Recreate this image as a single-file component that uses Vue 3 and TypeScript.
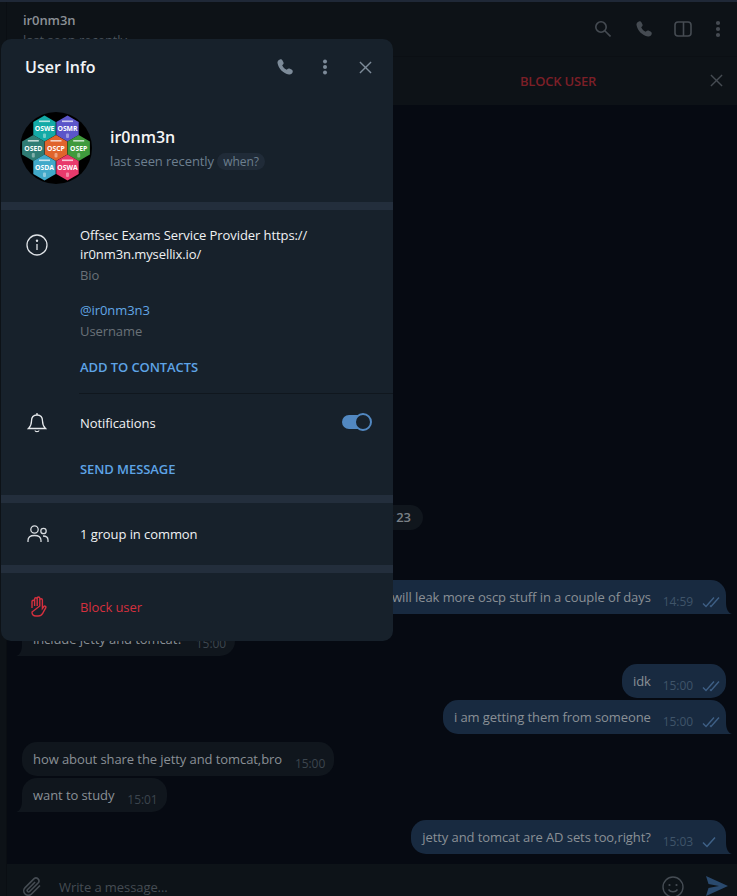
<script setup lang="ts">
type Msg = { id: number; side: 'in' | 'out'; text: string; time: string; check?: 1 | 2; tail?: boolean; top: number }
const messages: Msg[] = [
  { id: 1, side: 'out', text: 'i will leak more oscp stuff in a couple of days', time: '14:59', check: 2, tail: true, top: 0 },
  { id: 2, side: 'in', text: 'include jetty and tomcat?', time: '15:00', tail: true, top: 8 },
  { id: 3, side: 'out', text: 'idk', time: '15:00', check: 2, top: 8 },
  { id: 4, side: 'out', text: 'i am getting them from someone', time: '15:00', check: 2, tail: true, top: 2 },
  { id: 5, side: 'in', text: 'how about share the jetty and tomcat,bro', time: '15:00', top: 8 },
  { id: 6, side: 'in', text: 'want to study', time: '15:01', tail: true, top: 2 },
  { id: 7, side: 'out', text: 'jetty and tomcat are AD sets too,right?', time: '15:03', check: 1, tail: true, top: 8 }
]
const hexes = [
  { x: 44.5, y: 128.5, c: '#14aaa6', t: 'OSWE' },
  { x: 67.5, y: 128.5, c: '#5b55c9', t: 'OSMR' },
  { x: 33.3, y: 148, c: '#2f7c74', t: 'OSED' },
  { x: 56, y: 148, c: '#e0642c', t: 'OSCP' },
  { x: 78.7, y: 148, c: '#3f9a3c', t: 'OSEP' },
  { x: 44.5, y: 167.5, c: '#41a9c9', t: 'OSDA' },
  { x: 67.5, y: 167.5, c: '#e83a6c', t: 'OSWA' }
]
function hexPoints(x: number, y: number): string {
  const w = 11.2
  const h = 13
  const s = 6.5
  return `${x},${y - h} ${x + w},${y - s} ${x + w},${y + s} ${x},${y + h} ${x - w},${y + s} ${x - w},${y - s}`
}
const phonePath =
  'M3 .5C4 0 5 .5 5.500 1.500L6.500 3.500C6.800 4.300 6.600 5 6 5.500L5.200 6.200C5.800 8 7.800 10 9.800 10.800L10.500 10C11 9.400 11.800 9.300 12.500 9.600L14.500 10.600C15.500 11.100 16 12 15.700 13C15.300 14.700 13.800 15.800 12 15.500C6 14.500 1.500 9.500 .5 4C.2 2.500 1.200 1 3 .5Z'
</script>

<template>
  <div class="page">
    <div class="side"></div>
    <main class="chat">
      <header class="topbar">
        <div class="peer">
          <div class="peer-name">ir0nm3n</div>
          <div class="peer-status">last seen recently</div>
        </div>
        <div class="top-icons">
          <svg class="ti" viewBox="0 0 16 16" width="16" height="16"><circle cx="6" cy="6" r="5.200" /><path d="M9.800 9.800l5.700 5.700" /></svg>
          <svg class="ti fill phone-top" viewBox="0 0 16 16" width="16" height="16"><path :d="phonePath" /></svg>
          <svg class="ti panel-top" viewBox="0 0 18 16" width="18" height="16"><rect x="1" y="1" width="16" height="14" rx="3" /><path d="M9.500 1v14" /></svg>
          <svg class="ti dots" viewBox="0 0 6 20" width="6" height="20"><circle cx="3" cy="4" r="2.100" /><circle cx="3" cy="10" r="2.100" /><circle cx="3" cy="16" r="2.100" /></svg>
        </div>
      </header>

      <div class="blockbar">
        <span class="block-label">BLOCK USER</span>
        <svg class="block-close" viewBox="0 0 14 14" width="13" height="13"><path d="M1 1l12 12M13 1L1 13" /></svg>
      </div>

      <section class="messages">
        <div class="date-row"><span class="date-pill">February 23</span></div>
        <div
          v-for="m in messages"
          :key="m.id"
          class="row"
          :class="m.side"
          :style="{ marginTop: m.top + 'px' }"
        >
          <div class="bubble" :class="[m.side, { tail: m.tail }]">
            <span class="msg-text">{{ m.text }}</span>
            <span class="meta">
              <span class="time">{{ m.time }}</span>
              <svg v-if="m.check === 2" class="chk" viewBox="0 0 18 12" width="18" height="12"><path d="M1 7.500l3 3L12 1.500M8 9.500l1 1 8-9" /></svg>
              <svg v-if="m.check === 1" class="chk one" viewBox="0 0 14 12" width="14" height="12"><path d="M1 6.500l4 4L13 1.500" /></svg>
            </span>
          </div>
        </div>
      </section>

      <footer class="composer">
        <svg class="clip" viewBox="0 0 22 22" width="22" height="22"><path d="M19 9.500l-8.500 8.500a4.500 4.500 0 0 1-6.400-6.400l9-9a3 3 0 0 1 4.200 4.200l-8.700 8.700a1.400 1.400 0 0 1-2-2l7.500-7.500" /></svg>
        <span class="placeholder">Write a message...</span>
        <svg class="smile" viewBox="0 0 22 22" width="22" height="22"><circle cx="11" cy="11" r="10" /><circle class="eye" cx="7.500" cy="9" r="1.100" /><circle class="eye" cx="14.500" cy="9" r="1.100" /><path d="M6.500 13.500c2 3 7 3 9 0" /></svg>
        <svg class="send" viewBox="0 0 22 20" width="22" height="20"><path d="M0 0l22 10L0 20l2.500-8L13 10 2.500 8z" /></svg>
      </footer>
    </main>

    <aside class="modal">
      <div class="modal-head">
        <h1 class="modal-title">User Info</h1>
        <div class="modal-actions">
          <svg class="mi fill" viewBox="0 0 16 16" width="16" height="16"><path :d="phonePath" /></svg>
          <svg class="mi fill" viewBox="0 0 6 20" width="6" height="20"><circle cx="3" cy="4.500" r="2" /><circle cx="3" cy="10" r="2" /><circle cx="3" cy="15.500" r="2" /></svg>
          <svg class="mi close" viewBox="0 0 14 14" width="13" height="13"><path d="M1 1l12 12M13 1L1 13" /></svg>
        </div>
      </div>

      <div class="profile">
        <svg class="avatar" viewBox="20 112 72 72" width="72" height="72">
          <circle cx="56" cy="148" r="36" fill="#000" />
          <g v-for="h in hexes" :key="h.t">
            <polygon :points="hexPoints(h.x, h.y)" :fill="h.c" />
            <rect :x="h.x - 5.500" :y="h.y - 8" width="11" height="1.600" fill="#fff" opacity="0.7" />
            <rect :x="h.x - 1.500" :y="h.y + 5" width="3" height="4.500" rx="1" fill="#fff" opacity="0.4" />
            <text :x="h.x" :y="h.y + 2.500" class="hex-text" text-anchor="middle">{{ h.t }}</text>
          </g>
        </svg>
        <div class="profile-text">
          <div class="profile-name">ir0nm3n</div>
          <div class="profile-status">last seen recently <span class="when">when?</span></div>
        </div>
      </div>

      <div class="sep"></div>

      <div class="info-block">
        <div class="info-row">
          <svg class="row-icon info-icon" viewBox="0 0 22 22" width="22" height="22"><circle cx="11" cy="11" r="10" /><path d="M11 10v6" /><circle class="dot" cx="11" cy="6.700" r="1.200" /></svg>
          <div class="info-body">
            <div class="info-value">Offsec Exams Service Provider https://<br />ir0nm3n.mysellix.io/</div>
            <div class="info-label">Bio</div>
            <div class="info-link">@ir0nm3n3</div>
            <div class="info-label username">Username</div>
            <div class="action add">ADD TO CONTACTS</div>
          </div>
        </div>
        <div class="thin"></div>
        <div class="notify-row">
          <svg class="row-icon bell" viewBox="0 0 20 22" width="20" height="22"><path d="M10 3c-3.500 0-5.500 2.500-5.500 6 0 4-1 5.500-3 7.500h17c-2-2-3-3.500-3-7.500 0-3.500-2-6-5.500-6z" /><path d="M10 1v2M8 18.500c.3 1.600 3.700 1.600 4 0" /></svg>
          <span class="notify-label">Notifications</span>
          <span class="toggle"><span class="knob"></span></span>
        </div>
        <div class="send-msg action">SEND MESSAGE</div>
      </div>

      <div class="sep"></div>

      <div class="simple-row">
        <svg class="row-icon people" viewBox="0 0 22 18" width="22" height="18"><circle cx="7.500" cy="4.500" r="3.700" /><circle cx="16.500" cy="6" r="2.700" /><path d="M1 17v-1.500c0-3 2.500-5 6.500-5s6.500 2 6.500 5V17M16 11c3 0 5 1.500 5 4v2" /></svg>
        <span class="simple-label">1 group in common</span>
      </div>

      <div class="sep"></div>

      <div class="simple-row block-row">
        <svg class="row-icon hand" viewBox="0 0 18 22" width="18" height="22"><path d="M3 12V5.500a1.300 1.300 0 0 1 2.600 0V10M5.600 10V3a1.300 1.300 0 0 1 2.600 0v7M8.200 10V2.300a1.300 1.300 0 0 1 2.600 0V10M10.800 10V4a1.300 1.300 0 0 1 2.600 0v8.500l1.500-2c.9-1 2.500 0 1.800 1.300-1.200 2.200-2 3.800-3 5.500-1 1.800-2.300 2.700-4.500 2.700H7c-2.500 0-4-1.800-4-4z" /></svg>
        <span class="block-text">Block user</span>
      </div>
    </aside>
  </div>
</template>

<style>
html, body { margin: 0; padding: 0; background: #060a12; }
</style>

<style scoped>
.page {
  position: relative;
  width: 737px;
  height: 896px;
  overflow: hidden;
  display: flex;
  background: #060a12;
  border-top: 2px solid #1f2837;
  box-sizing: border-box;
  font-family: "Open Sans", "Noto Sans", sans-serif;
  font-size: 13px;
  letter-spacing: -0.08px;
}
.side { width: 6px; flex: none; background: #0d1217; }
.chat { flex: 1; min-width: 0; display: flex; flex-direction: column; border-left: 1px solid #0a0e13; }

.topbar {
  height: 54px;
  flex: none;
  box-sizing: border-box;
  background: #0d1217;
  display: flex;
  justify-content: space-between;
  padding: 9px 16px 0 16px;
}
.peer-name { color: #8b9096; font-weight: 600; font-size: 13px; line-height: 18px; }
.peer-status { color: #4a535c; font-size: 13px; line-height: 18px; margin-top: 2px; }
.top-icons { display: flex; align-items: center; height: 20px; margin-top: 8px; }
.ti { fill: none; stroke: #454b52; stroke-width: 1.600; }
.ti.fill, .ti.dots { fill: #454b52; stroke: none; }
.phone-top { margin-left: 25px; }
.panel-top { margin-left: 22px; }
.dots { margin-left: 23px; }

.blockbar {
  height: 49px;
  flex: none;
  box-sizing: border-box;
  background: #0d1217;
  border-top: 1px solid #0b0f14;
  position: relative;
  display: flex;
  align-items: center;
  justify-content: center;
  padding-left: 372px;
}
.block-label { color: #7c1f27; font-weight: 600; font-size: 13px; letter-spacing: -0.2px; }
.block-close { position: absolute; right: 14px; top: 17px; fill: none; stroke: #454b52; stroke-width: 1.500; }

.messages {
  flex: 1;
  min-height: 0;
  display: flex;
  flex-direction: column;
  justify-content: flex-end;
  padding: 0 11px 10px 15px;
}
.date-row { display: flex; justify-content: center; margin-bottom: 50px; }
.date-pill {
  background: #10161d;
  color: #7a8087;
  font-weight: 600;
  font-size: 13px;
  line-height: 19px;
  padding: 3px 12px;
  border-radius: 13px;
}
.row { display: flex; }
.row.out { justify-content: flex-end; }
.row.in { justify-content: flex-start; }
.bubble {
  position: relative;
  display: flex;
  align-items: flex-end;
  height: 34px;
  box-sizing: border-box;
  border-radius: 15px;
  white-space: nowrap;
}
.bubble.in { background: #10161d; padding: 0 9px 0 11px; }
.bubble.in .meta { margin-left: 13px; }
.bubble.out { background: #182a40; padding: 0 6px 0 11px; }
.bubble.out.tail { border-bottom-right-radius: 0; }
.bubble.in.tail { border-bottom-left-radius: 0; }
.bubble.tail::after {
  content: "";
  position: absolute;
  bottom: 0;
  width: 6px;
  height: 12px;
  background: inherit;
}
.bubble.out.tail::after { right: -6px; clip-path: path("M0 0 C0 7 2 11 6 12 L0 12 Z"); }
.bubble.in.tail::after { left: -6px; clip-path: path("M6 0 C6 7 4 11 0 12 L6 12 Z"); }
.msg-text { color: #8a9096; font-size: 13px; line-height: 18px; align-self: center; }
.meta { display: flex; align-items: center; margin-left: 12px; height: 18px; margin-bottom: 3px; }
.time { font-size: 12px; line-height: 16px; }
.bubble.in .time { color: #3c454e; }
.bubble.out .time { color: #3f5469; }
.chk { margin-left: 9px; fill: none; stroke: #3e5f85; stroke-width: 1.400; }
.chk.one { margin-left: 9px; margin-right: 4px; stroke: #3f6288; stroke-width: 1.500; }

.composer {
  height: 32px;
  flex: none;
  background: #0d1318;
  display: flex;
  align-items: flex-start;
  padding: 12px 9px 0 14px;
  box-sizing: border-box;
  overflow: hidden;
}
.clip { fill: none; stroke: #454c53; stroke-width: 1.600; flex: none; }
.placeholder { color: #454c53; font-size: 13px; line-height: 18px; margin-left: 16px; margin-top: 2px; flex: 1; }
.smile { fill: none; stroke: #454c53; stroke-width: 1.400; flex: none; margin-right: 22px; }
.smile .eye { fill: #454c53; stroke: none; }
.send { fill: #2a4a6e; flex: none; }

.modal {
  position: absolute;
  left: 1px;
  top: 37px;
  width: 392px;
  height: 602px;
  background: #17212b;
  border-radius: 10px;
  overflow: hidden;
  display: flex;
  flex-direction: column;
}
.modal-head {
  height: 56px;
  display: flex;
  align-items: center;
  justify-content: space-between;
  padding: 0 21px 0 24px;
  flex: none;
}
.modal-title { margin: 0; color: #f1f4f7; font-size: 16px; font-weight: 600; line-height: 24px; letter-spacing: 0; }
.modal-actions { display: flex; align-items: center; }
.mi.fill { fill: #7d8b99; }
.mi.close { fill: none; stroke: #7d8b99; stroke-width: 1.500; margin-left: 31px; }
.modal-actions .mi:first-child { margin-right: 29px; }
.profile {
  display: flex;
  align-items: center;
  padding: 17px 0 18px 19px;
  flex: none;
  height: 107px;
  box-sizing: border-box;
}
.avatar { flex: none; display: block; }
.hex-text { fill: #fff; font-family: "Open Sans", sans-serif; font-size: 6.800px; font-weight: 700; letter-spacing: 0; }
.profile-text { margin-left: 18px; }
.profile-name { color: #f5f5f5; font-size: 16px; font-weight: 600; line-height: 22px; letter-spacing: 0; }
.profile-status { color: #6d7f8f; font-size: 13px; line-height: 18px; margin-top: 4px; }
.when {
  display: inline-block;
  background: #202b38;
  color: #6d7f8f;
  font-size: 12px;
  line-height: 17px;
  padding: 0 6px;
  border-radius: 9px;
}
.sep { height: 8px; background: #232e3c; flex: none; }

.info-block { flex: none; height: 285px; box-sizing: border-box; padding-top: 16px; }
.info-row { display: flex; }
.row-icon { flex: none; }
.info-icon { margin: 8px 0 0 25px; fill: none; stroke: #dfe3e7; stroke-width: 1.300; }
.info-icon .dot { fill: #dfe3e7; stroke: none; }
.info-body { margin-left: 32px; }
.info-value { color: #f0f2f4; font-size: 13px; line-height: 19px; }
.info-label { color: #6a7178; font-size: 13px; line-height: 18px; margin-top: 2px; }
.info-label.username { margin-top: 3px; }
.info-link { color: #62a7e6; font-size: 13px; line-height: 18px; margin-top: 17px; }
.action { color: #5ea4e6; font-weight: 600; font-size: 13px; line-height: 18px; }
.add { margin-top: 18px; }
.thin { height: 1px; background: #10171e; margin: 17px 0 0 78px; }
.notify-row { display: flex; align-items: center; height: 58px; }
.bell { margin-left: 26px; fill: none; stroke: #e6e9ec; stroke-width: 1.300; }
.notify-label { margin-left: 33px; color: #f0f2f4; font-size: 13px; flex: 1; }
.toggle {
  position: relative;
  width: 26px;
  height: 14px;
  background: #5288c1;
  border-radius: 7px;
  margin: -2px 25px 0 0;
}
.knob {
  position: absolute;
  right: -4px;
  top: -2px;
  width: 18px;
  height: 18px;
  box-sizing: border-box;
  border-radius: 50%;
  background: #17212b;
  border: 2px solid #5288c1;
}
.send-msg { margin: 8px 0 0 79px; }

.simple-row { display: flex; align-items: center; height: 62px; flex: none; }
.people { margin-left: 26px; fill: none; stroke: #d6dade; stroke-width: 1.300; }
.simple-label { margin-left: 31px; color: #f0f2f4; font-size: 13px; }
.block-row { height: 68px; }
.hand { margin-left: 28px; fill: none; stroke: #d5303e; stroke-width: 1.400; }
.block-text { margin-left: 33px; color: #d5303e; font-size: 13px; }
</style>
